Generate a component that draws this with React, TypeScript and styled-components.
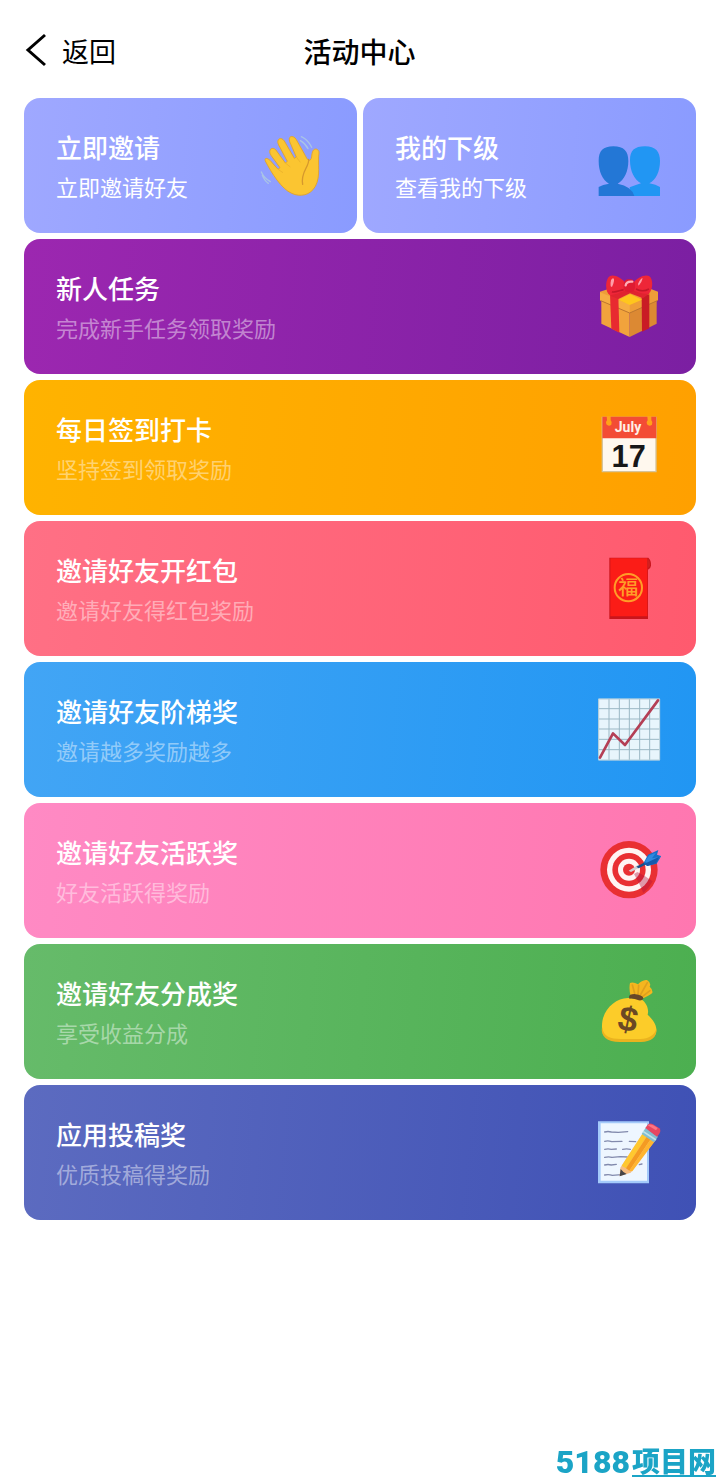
import React from "react";
import styled, { createGlobalStyle } from "styled-components";

const GlobalStyle = createGlobalStyle`
  *, *::before, *::after { box-sizing: border-box; }
  body {
    margin: 0;
    background: #fff;
    font-family: "Noto Sans CJK SC", "Noto Sans", sans-serif;
  }
`;

const Page = styled.div`
  min-height: 100vh;
  display: flex;
  flex-direction: column;
`;

const Header = styled.header`
  display: grid;
  grid-template-columns: 1fr auto 1fr;
  align-items: center;
  height: 98px;
  padding: 4px 24px 0;
`;

const BackButton = styled.button`
  display: flex;
  align-items: center;
  justify-self: start;
  gap: 14px;
  padding: 0;
  border: 0;
  background: none;
  color: #000;
  font: inherit;
  font-size: 27px;
  line-height: 40px;
  cursor: pointer;
`;

const BackIcon = styled.svg`
  width: 24px;
  height: 34px;
  margin-bottom: 2px;
`;

const PageTitle = styled.h1`
  margin: 0;
  font-size: 28px;
  font-weight: 500;
  line-height: 40px;
`;

const CardGrid = styled.main`
  display: grid;
  grid-template-columns: 1fr 1fr;
  gap: 6px;
  padding: 0 23px 24px 24px;
`;

const Card = styled.a<{ $from: string; $to: string; $half?: boolean }>`
  grid-column: ${(p) => (p.$half ? "auto" : "1 / -1")};
  display: flex;
  align-items: center;
  justify-content: space-between;
  min-height: 135px;
  padding: 0 35px 0 32px;
  border-radius: 16px;
  background: linear-gradient(95deg, ${(p) => p.$from}, ${(p) => p.$to});
  color: #fff;
  text-decoration: none;
`;

const CardText = styled.div`
  display: flex;
  flex-direction: column;
`;

const CardTitle = styled.h2`
  margin: 0;
  font-size: 26px;
  font-weight: 500;
  line-height: 40px;
`;

const CardNote = styled.p<{ $bright?: boolean }>`
  margin: 0;
  font-size: 22px;
  line-height: 38px;
  color: ${(p) => (p.$bright ? "#fff" : "rgba(255, 255, 255, 0.45)")};
`;

const Icon = styled.svg`
  flex: none;
  width: 64px;
  height: 64px;
`;

const Watermark = styled.div`
  position: fixed;
  right: 3px;
  bottom: 0;
  display: flex;
  align-items: flex-start;
  gap: 2px;
  color: #1ba4c6;
  font-weight: 900;
`;

const WatermarkNumber = styled.span`
  font-family: Roboto, sans-serif;
  font-size: 32px;
  line-height: 34px;
`;

const WatermarkName = styled.span`
  font-size: 28px;
  line-height: 30px;
  border-bottom: 2px solid #1ba4c6;
`;

const Wave = () => (
  <Icon viewBox="24 40 192 192" aria-hidden="true">
    <g fill="none" stroke="#a9c4e6" strokeWidth="4" strokeLinecap="round">
      <path d="M154 48Q175 58 185 80M151 60Q166 68 174 84M34 154Q42 172 61 183M37 164Q44 181 55 188" />
    </g>
    <path
      d="M46 121C42 109 54 113 60 119L84 146L90 141L63 104C53 88 65 77 77 87L106 127L112 122L86 73C77 56 93 46 103 61L133 113L139 109L119 63C113 44 131 43 139 57L166 105C171 115 175 121 180 119C187 113 184 101 188 92C193 80 208 85 207 97C202 127 213 166 196 197C181 224 151 230 125 218C95 205 65 158 46 121Z"
      fill="#fbc531"
      stroke="#e3a62f"
      strokeWidth="3"
    />
    <path d="M84 146L99 156M106 127L121 139M139 109L151 125" stroke="#eeb52d" strokeWidth="3" fill="none" />
    <path d="M176 116C178 139 151 153 158 191" fill="none" stroke="#d6982d" strokeWidth="4" strokeLinecap="round" />
  </Icon>
);

const People = () => (
  <Icon viewBox="39 26 192 192" aria-hidden="true">
    <path d="M137 212V186Q153 180 171 174C151 163 138 138 138 105C138 76 151 63 183 63C215 63 228 79 228 107C228 138 216 163 196 174Q216 178 228 185V212Z" fill="#2196f3" />
    <path d="M44 212V185Q56 178 75 175C55 163 44 138 44 106C44 77 57 63 88 63C120 63 133 78 133 107C133 138 121 163 101 175Q143 183 151 212Z" fill="#2377d6" />
  </Icon>
);

const Gift = () => (
  <Icon viewBox="39 38 192 192" aria-hidden="true">
    <path d="M52 100L137 134V224L52 184Z" fill="#f1a33c" />
    <path d="M137 134L218 100V184L137 224Z" fill="#dc8933" />
    <path d="M48 88L80 78H195L222 88V114L137 152L48 114Z" fill="#ee9d38" />
    <path d="M48 90L137 126V152L48 114Z" fill="#f6ad43" />
    <path d="M50 115L137 152L220 115" fill="none" stroke="#bc7630" strokeWidth="3" />
    <path d="M78 96L103 100L106 211L82 199Z" fill="#e82a30" />
    <path d="M173 100L196 96V198L174 208Z" fill="#c91c25" />
    <path d="M78 89L135 76L197 93L177 108L138 93L103 110L80 101Z" fill="#e0242f" />
    <path d="M104 112L138 95L174 112L137 128Z" fill="#ffc61d" />
    <path d="M126 64C113 45 89 35 78 41C63 50 62 89 78 99C91 98 112 90 126 84Z" fill="#ee2638" />
    <path d="M146 64C158 45 184 35 195 41C209 50 207 83 194 94C178 96 160 90 147 83Z" fill="#ee2638" />
    <path d="M84 88C92 92 107 84 119 82M156 80C169 87 184 86 195 80" stroke="#c51729" strokeWidth="5" fill="none" />
    <rect x="119" y="51" width="34" height="38" rx="14" fill="#df1b31" />
    <path d="M125 69Q127 56 145 58" fill="none" stroke="#ffadb7" strokeWidth="7" strokeLinecap="round" />
    <path d="M80 72Q78 48 88 48Q94 52 84 74M162 65Q169 48 176 48Q174 59 164 70" fill="#ff9ea9" />
  </Icon>
);

const Calendar = () => (
  <Icon viewBox="39 47 192 192" aria-hidden="true">
    <path d="M53 49H218V216H53Z" fill="#d6c49b" />
    <path d="M57 107H214V212H57Z" fill="#fff8ee" />
    <path d="M55 49H217V114H55Z" fill="#f34c35" />
    <g fill="#ffa318">
      <path d="M68 47H80V60Q86 66 82 73Q74 80 67 72Q64 64 69 60Z" />
      <path d="M190 47H202V60Q208 66 204 73Q196 80 189 72Q186 64 191 60Z" />
    </g>
    <text x="132" y="96" textAnchor="middle" fill="#fff0e7" fontFamily="Roboto, sans-serif" fontSize="42" fontWeight="700">July</text>
    <text x="134" y="199" textAnchor="middle" fill="#171717" fontFamily="Liberation Sans, sans-serif" fontSize="92" fontWeight="700">17</text>
  </Icon>
);

const RedEnvelope = () => (
  <Icon viewBox="39 44 192 192" aria-hidden="true">
    <path d="M76 46H193Q202 53 201 70Q200 79 192 82V230H76Z" fill="#c9151c" />
    <path d="M79 48H190V222H79Z" fill="#fb1c17" />
    <path d="M190 48Q199 56 198 69Q197 77 190 78Z" fill="#d2201f" />
    <circle cx="133" cy="136" r="41" fill="none" stroke="#ff9d28" strokeWidth="6" />
    <text x="133" y="157" textAnchor="middle" fill="#ff9d28" fontFamily="Noto Sans CJK SC, sans-serif" fontSize="60" fontWeight="500">福</text>
  </Icon>
);

const Chart = () => (
  <Icon viewBox="39 44 192 192" aria-hidden="true">
    <path d="M43 46H228V231H43Z" fill="#e8f5fc" />
    <path d="M44 76H227M44 107H227M44 137H227M44 168H227M44 199H227M75 47V230M106 47V230M136 47V230M167 47V230M197 47V230" stroke="#9bb7c4" strokeWidth="3" />
    <path d="M44 47H227V230H44Z" fill="none" stroke="#b5ccd7" strokeWidth="3" />
    <path d="M48 223L87 150L123 185L222 51" fill="none" stroke="#b43f55" strokeWidth="8" strokeLinejoin="round" strokeLinecap="round" />
  </Icon>
);

const Target = () => (
  <Icon viewBox="39 41 192 192" aria-hidden="true">
    <circle cx="135" cy="133" r="86" fill="#e92f32" />
    <circle cx="135" cy="133" r="66" fill="#fff4f3" />
    <circle cx="135" cy="133" r="50" fill="#e92f32" />
    <circle cx="135" cy="133" r="33" fill="#fff4f3" />
    <circle cx="135" cy="133" r="18" fill="#e92f32" />
    <path d="M150 146L160 140L182 152L206 168Q195 189 178 203L168 180Z" fill="#b0123c" opacity="0.4" />
    <path d="M134 136L163 118L169 126L141 140Z" fill="#d1cdd0" />
    <path d="M157 124L193 105L196 112L164 129Z" fill="#174f8a" />
    <path d="M179 112L192 88L223 74L219 88L232 92L218 115L190 122Z" fill="#1970c9" />
    <path d="M183 108L196 90L216 82L204 99L228 95L212 106L192 116Z" fill="#3189df" />
    <path d="M180 116L226 94L216 114L190 122Z" fill="#1659ac" />
  </Icon>
);

const MoneyBag = () => (
  <Icon viewBox="39 44 192 192" aria-hidden="true">
    <path d="M140 92Q134 69 138 53Q148 49 162 57Q175 43 189 44Q203 53 197 64Q207 72 205 83Q194 93 172 100Z" fill="#f5b61f" />
    <path d="M145 59L152 84M164 60L162 88M190 52L169 89M198 76L175 94" fill="none" stroke="#dfa01e" strokeWidth="5" strokeLinecap="round" />
    <path d="M137 98C98 94 54 132 54 181C52 211 72 226 109 226H172C201 226 217 215 217 194C217 174 203 160 191 148C197 127 181 103 167 101Z" fill="#fccc29" />
    <path d="M54 185C60 216 79 220 111 221H169C194 220 214 210 217 188C221 216 200 230 171 230H108C68 230 49 212 54 185Z" fill="#eab31f" />
    <path d="M135 94Q136 86 151 86Q179 89 178 100Q174 107 164 105Q148 98 136 100Z" fill="#684729" />
    <text x="132" y="197" textAnchor="middle" fill="#6b4824" fontFamily="Liberation Sans, sans-serif" fontSize="104" fontWeight="700" transform="rotate(12 132 162)">$</text>
  </Icon>
);

const Memo = () => (
  <Icon viewBox="39 44 192 192" aria-hidden="true">
    <path d="M42 45H195V231H42Z" fill="#a4cafa" />
    <path d="M50 51H189V223H50Z" fill="#eef6ff" />
    <path d="M62 77Q72 74 82 77L103 78L131 76M62 105Q72 102 83 106L114 105M136 105L155 106M62 129Q72 126 82 129L97 128M116 129Q128 126 139 129M62 153Q74 150 84 153L109 151L130 152M62 176Q72 173 82 176L97 174M166 175L174 173M62 206Q74 203 85 207L112 205" fill="none" stroke="#828aad" strokeWidth="4" strokeLinecap="round" />
    <path d="M109 184L177 80L213 103L140 199L107 209Z" fill="#f5bd83" />
    <path d="M113 178L177 80L190 88L126 186Z" fill="#ffc82f" />
    <path d="M126 186L190 88L202 96L136 193Z" fill="#f49b22" />
    <path d="M136 193L202 96L213 104L145 195Z" fill="#ffb52f" />
    <path d="M110 188L107 210L128 203Q118 199 110 188Z" fill="#454448" />
    <path d="M173 83L185 64L222 91L210 108Z" fill="#83bed0" />
    <path d="M177 75L216 101" stroke="#c2e2e7" strokeWidth="5" />
    <path d="M184 65L191 55Q197 49 207 54L226 66Q232 72 226 82L219 91Z" fill="#e74761" />
    <path d="M191 57Q199 50 221 65L216 72Z" fill="#fc7583" />
  </Icon>
);

type Item = {
  title: string;
  note: string;
  from: string;
  to: string;
  icon: React.ReactNode;
  half?: boolean;
};

const items: Item[] = [
  { title: "立即邀请", note: "立即邀请好友", from: "#9fa8ff", to: "#8a9bff", icon: <Wave />, half: true },
  { title: "我的下级", note: "查看我的下级", from: "#9fa8ff", to: "#8a9bff", icon: <People />, half: true },
  { title: "新人任务", note: "完成新手任务领取奖励", from: "#9c27b0", to: "#7b1fa2", icon: <Gift /> },
  { title: "每日签到打卡", note: "坚持签到领取奖励", from: "#ffb300", to: "#ffa000", icon: <Calendar /> },
  { title: "邀请好友开红包", note: "邀请好友得红包奖励", from: "#ff7085", to: "#ff5a6e", icon: <RedEnvelope /> },
  { title: "邀请好友阶梯奖", note: "邀请越多奖励越多", from: "#42a5f5", to: "#2196f3", icon: <Chart /> },
  { title: "邀请好友活跃奖", note: "好友活跃得奖励", from: "#ff8ac4", to: "#ff77b0", icon: <Target /> },
  { title: "邀请好友分成奖", note: "享受收益分成", from: "#66bb6a", to: "#4caf50", icon: <MoneyBag /> },
  { title: "应用投稿奖", note: "优质投稿得奖励", from: "#5c6bc0", to: "#3f51b5", icon: <Memo /> },
];

export default function App() {
  return (
    <Page>
      <GlobalStyle />
      <Header>
        <BackButton type="button">
          <BackIcon viewBox="0 0 24 34" aria-hidden="true">
            <path d="M21 2L4 17L21 32" fill="none" stroke="#000" strokeWidth="3" />
          </BackIcon>
          返回
        </BackButton>
        <PageTitle>活动中心</PageTitle>
      </Header>
      <CardGrid>
        {items.map((item) => (
          <Card key={item.title} href="#" $from={item.from} $to={item.to} $half={item.half}>
            <CardText>
              <CardTitle>{item.title}</CardTitle>
              <CardNote $bright={item.half}>{item.note}</CardNote>
            </CardText>
            {item.icon}
          </Card>
        ))}
      </CardGrid>
      <Watermark>
        <WatermarkNumber>5188</WatermarkNumber>
        <WatermarkName>项目网</WatermarkName>
      </Watermark>
    </Page>
  );
}
